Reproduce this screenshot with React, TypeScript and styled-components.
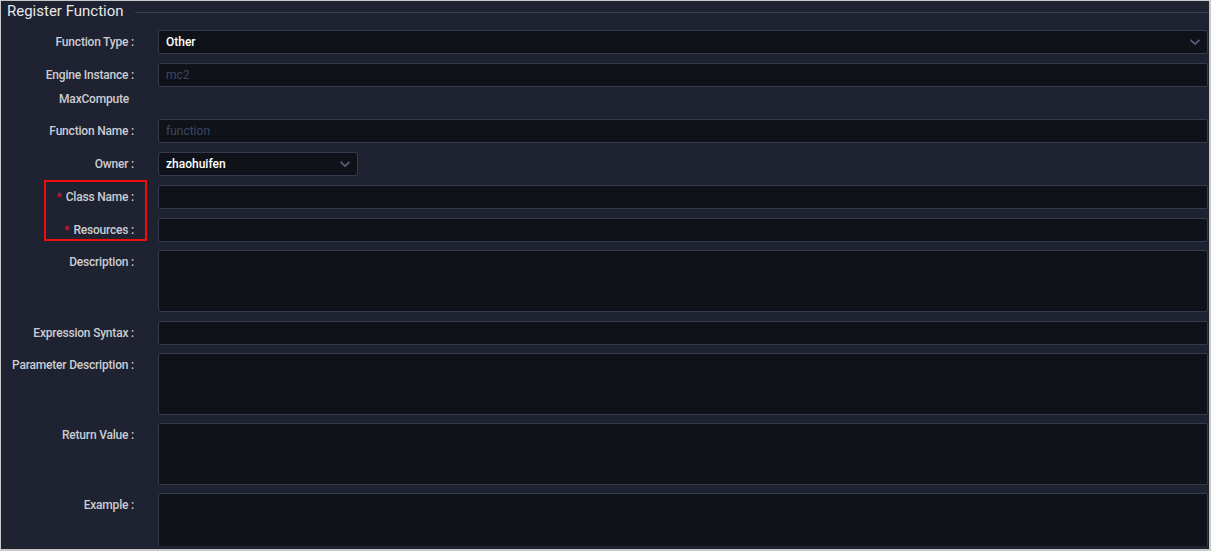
import React from "react";
import styled, { createGlobalStyle } from "styled-components";

const GlobalStyle = createGlobalStyle`
  html, body {
    margin: 0;
    padding: 0;
    background: #ffffff;
  }
`;

const Panel = styled.div`
  width: 1211px;
  height: 551px;
  box-sizing: border-box;
  border: 1px solid #c9c9c9;
  border-right-width: 2px;
  border-bottom-width: 2px;
  background-color: #1f2230;
  display: flex;
  flex-direction: column;
  padding-bottom: 3px;
  overflow: hidden;
  font-family: Roboto, "Liberation Sans", Arial, sans-serif;
`;

const Legend = styled.div`
  height: 21px;
  display: flex;
  align-items: center;
  padding-left: 6px;
  flex-shrink: 0;
`;

const Title = styled.div`
  font-size: 15px;
  color: #e6e7ea;
  line-height: 21px;
`;

const Rule = styled.div`
  flex: 1;
  height: 1px;
  margin-left: 11px;
  margin-top: 2px;
  background-color: #3a3d50;
`;

const Body = styled.div`
  flex: 1;
  overflow: hidden;
  padding: 8px 1px 0 0;
`;

const Row = styled.div<{ $gap?: number }>`
  display: grid;
  grid-template-columns: 133px 1fr;
  column-gap: 24px;
  margin-bottom: ${(p) => (p.$gap === undefined ? 9 : p.$gap)}px;
`;

const Label = styled.div<{ $pad?: number }>`
  font-size: 12px;
  font-weight: 500;
  letter-spacing: -0.2px;
  color: #cbcdd3;
  line-height: 24px;
  text-align: right;
  white-space: nowrap;
  padding-right: ${(p) => p.$pad || 0}px;
`;

const Star = styled.span`
  color: #d4162c;
  margin-right: 4px;
`;

const Field = styled.div<{ $width?: number; $height?: number }>`
  box-sizing: border-box;
  width: ${(p) => (p.$width ? `${p.$width}px` : "100%")};
  height: ${(p) => p.$height || 24}px;
  border: 1px solid #363a4d;
  border-radius: 2px;
  background-color: #10121a;
  display: flex;
  align-items: center;
  padding: 0 6px 0 7px;
  font-size: 12px;
  color: #ffffff;
`;

const Value = styled.span`
  flex: 1;
  font-weight: 500;
`;

const Placeholder = styled.span`
  flex: 1;
  color: #3c4762;
`;

const Group = styled.div`
  position: relative;
`;

const Highlight = styled.div`
  position: absolute;
  left: 43px;
  top: -5px;
  width: 103px;
  height: 61px;
  box-sizing: border-box;
  border: 2px solid #f00d0d;
  pointer-events: none;
`;

const Chevron = () => (
  <svg width="12" height="8" viewBox="0 0 12 8">
    <path
      d="M1.5 1.8 L6 6 L10.5 1.8"
      fill="none"
      stroke="#5b6078"
      strokeWidth="1.7"
    />
  </svg>
);

const App = () => {
  return (
    <>
      <GlobalStyle />
      <Panel>
        <Legend>
          <Title>Register Function</Title>
          <Rule />
        </Legend>
        <Body>
          <Row>
            <Label>Function Type :</Label>
            <Field>
              <Value>Other</Value>
              <Chevron />
            </Field>
          </Row>
          <Row $gap={0}>
            <Label>Engine Instance :</Label>
            <Field>
              <Placeholder>mc2</Placeholder>
            </Field>
          </Row>
          <Row $gap={8}>
            <Label $pad={5}>MaxCompute</Label>
            <div />
          </Row>
          <Row>
            <Label>Function Name :</Label>
            <Field>
              <Placeholder>function</Placeholder>
            </Field>
          </Row>
          <Row>
            <Label>Owner :</Label>
            <Field $width={200}>
              <Value>zhaohuifen</Value>
              <Chevron />
            </Field>
          </Row>
          <Group>
            <Row>
              <Label>
                <Star>*</Star>Class Name :
              </Label>
              <Field />
            </Row>
            <Row $gap={8}>
              <Label>
                <Star>*</Star>Resources :
              </Label>
              <Field />
            </Row>
            <Highlight />
          </Group>
          <Row>
            <Label>Description :</Label>
            <Field $height={62} />
          </Row>
          <Row $gap={8}>
            <Label>Expression Syntax :</Label>
            <Field />
          </Row>
          <Row $gap={8}>
            <Label>Parameter Description :</Label>
            <Field $height={62} />
          </Row>
          <Row $gap={8}>
            <Label>Return Value :</Label>
            <Field $height={62} />
          </Row>
          <Row>
            <Label>Example :</Label>
            <Field $height={62} />
          </Row>
        </Body>
      </Panel>
    </>
  );
};

export default App;
